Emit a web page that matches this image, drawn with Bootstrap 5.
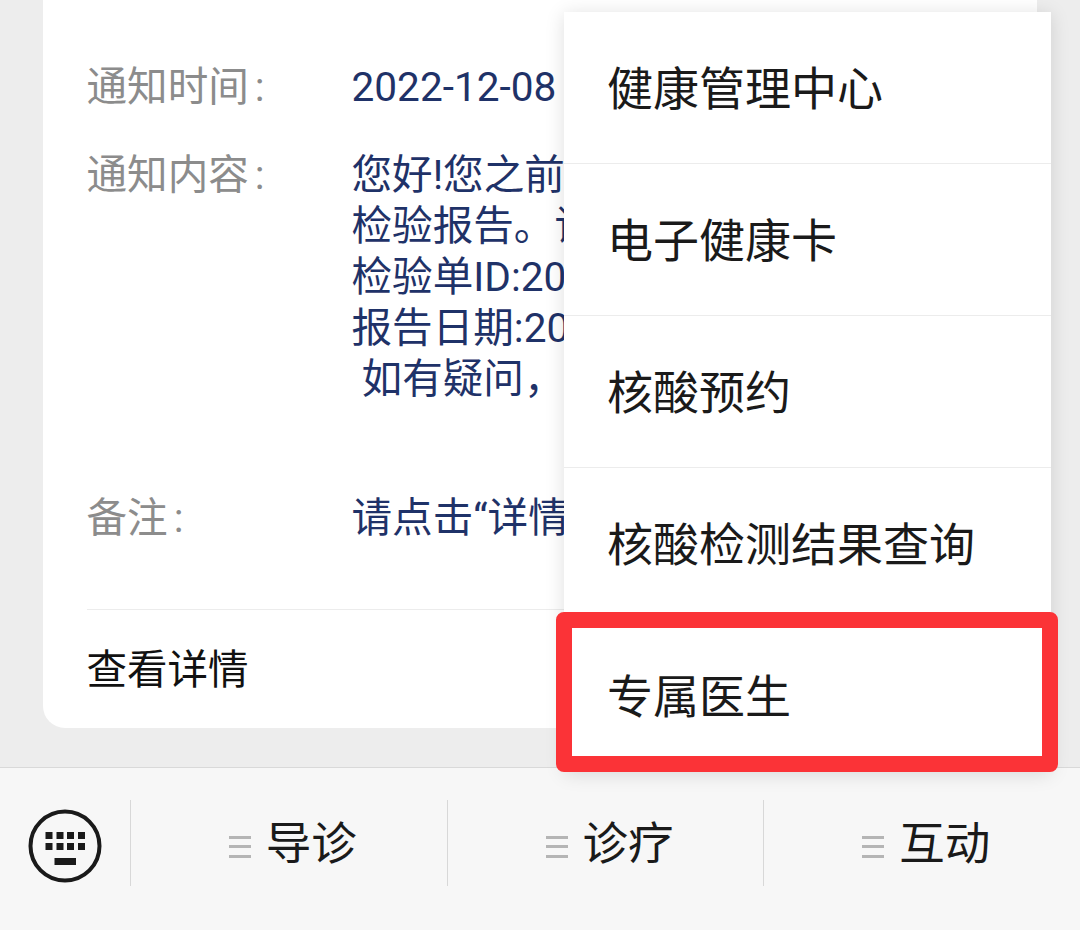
<!DOCTYPE html>
<html lang="zh-Hans">
<head>
  <meta charset="UTF-8" />
  <title>通知</title>
  <link href="https://cdn.jsdelivr.net/npm/bootstrap@5.3.3/dist/css/bootstrap.min.css" rel="stylesheet">
  <style>
    html, body { height: 930px; overflow: hidden; }
    body { background: #ededed; font-family: Roboto, "Noto Sans CJK SC", sans-serif; color: #1a1a1a; position: relative; }
    .page-area { height: 767px; padding: 0 43px 39px; }
    .notice-card { background: #fff; height: 728px; border-radius: 0 0 22px 22px; padding: 62px 44px 0 43.5px; overflow: hidden; display: flex; flex-direction: column; }
    .notice-row { display: flex; font-size: 40.6px; line-height: 51px; white-space: nowrap; }
    .notice-label { width: 265px; color: #8c8c8c; flex-shrink: 0; }
    .label-colon { margin-left: 6px; }
    .notice-value { color: #1f3268; }
    .row-time { margin-bottom: 37px; }
    .row-body { margin-bottom: 88px; }
    .detail-link { margin-top: auto; border-top: 1px solid #ececec; height: 119px; font-size: 40.5px; line-height: 121px; color: #111; }
    .bottom-bar { height: 163px; background: #f7f7f7; border-top: 1px solid #d9d9d9; padding-top: 32px; display: flex; align-items: flex-start; }
    .kb-cell { width: 131px; height: 86px; display: flex; align-items: center; justify-content: center; border-right: 1px solid #d8d8d8; padding-top: 5px; }
    .bar-cell { flex: 1; height: 86px; display: flex; align-items: center; justify-content: center; gap: 15px; font-size: 45.5px; color: #1a1a1a; border-right: 1px solid #d8d8d8; padding: 5px 0 0 8px; }
    .bar-cell:last-child { border-right: 0; }
    .bar-lines { width: 22px; height: 22px; border-top: 3px solid #b5b5b5; border-bottom: 3px solid #b5b5b5; position: relative; margin-top: 3px; }
    .bar-lines::after { content: ""; position: absolute; left: 0; right: 0; top: 6px; height: 3px; background: #b5b5b5; }
    .pop-menu { position: absolute; left: 564px; top: 12px; width: 487px; background: #fff; box-shadow: 0 2px 18px rgba(0,0,0,.13); }
    .pop-item { height: 152px; padding-left: 43px; font-size: 46px; line-height: 155px; color: #1a1a1a; border-bottom: 1px solid #ececec; white-space: nowrap; }
    .pop-item:last-child { border-bottom: 0; }
    .red-box { position: absolute; left: 556px; top: 612px; width: 502px; height: 160px; border: 16px solid #fb3337; border-radius: 8px; }
  </style>
</head>
<body>
  <div class="page-area">
    <div class="notice-card">
      <div class="notice-row row-time">
        <div class="notice-label">通知时间<span class="label-colon">:</span></div>
        <div class="notice-value">2022-12-08</div>
      </div>
      <div class="notice-row row-body">
        <div class="notice-label">通知内容<span class="label-colon">:</span></div>
        <div class="notice-value">
          您好!您之前<br>
          检验报告。请<br>
          检验单ID:20<br>
          报告日期:20<br>
          &nbsp;如有疑问，
        </div>
      </div>
      <div class="notice-row">
        <div class="notice-label">备注<span class="label-colon">:</span></div>
        <div class="notice-value">请点击“详情</div>
      </div>
      <div class="detail-link">查看详情</div>
    </div>
  </div>

  <div class="bottom-bar">
    <div class="kb-cell">
      <svg width="74" height="74" viewBox="0 0 74 74">
        <circle cx="37" cy="37" r="34.5" fill="none" stroke="#1a1a1a" stroke-width="4"/>
        <g fill="#1a1a1a">
          <rect x="17.5" y="23" width="7" height="7"/><rect x="28.5" y="23" width="7" height="7"/><rect x="39" y="23" width="7" height="7"/><rect x="50" y="23" width="7" height="7"/>
          <rect x="17.5" y="34" width="7" height="7"/><rect x="28.5" y="34" width="7" height="7"/><rect x="39" y="34" width="7" height="7"/><rect x="50" y="34" width="7" height="7"/>
          <rect x="26.5" y="49" width="21.5" height="7"/>
        </g>
      </svg>
    </div>
    <div class="bar-cell"><span class="bar-lines"></span><span>导诊</span></div>
    <div class="bar-cell"><span class="bar-lines"></span><span>诊疗</span></div>
    <div class="bar-cell"><span class="bar-lines"></span><span>互动</span></div>
  </div>

  <div class="pop-menu">
    <div class="pop-item">健康管理中心</div>
    <div class="pop-item">电子健康卡</div>
    <div class="pop-item">核酸预约</div>
    <div class="pop-item">核酸检测结果查询</div>
    <div class="pop-item">专属医生</div>
  </div>
  <div class="red-box"></div>

  <script src="https://cdn.jsdelivr.net/npm/bootstrap@5.3.3/dist/js/bootstrap.bundle.min.js"></script>
</body>
</html>
